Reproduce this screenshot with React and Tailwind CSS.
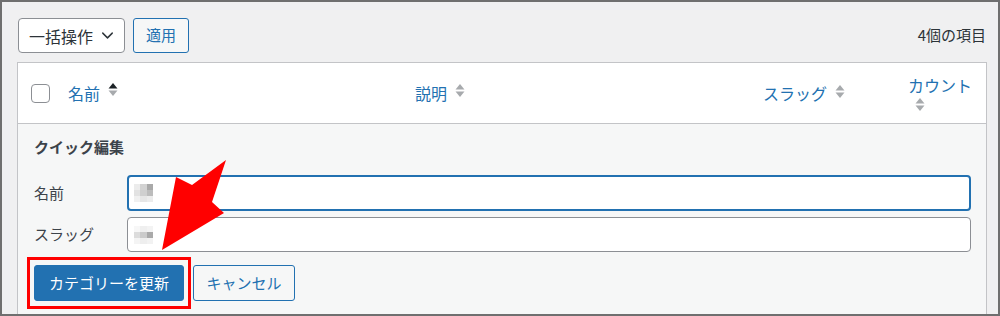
import { ChevronDown } from "lucide-react";

const jp = { fontFamily: '"Noto Sans CJK JP", "Noto Sans", sans-serif' };

function SortArrows({ active }) {
  return (
    <svg width="10" height="13" viewBox="0 0 10 13" className="shrink-0">
      <polygon points="0.5,5.5 5,0 9.5,5.5" fill={active ? "#1d2327" : "#a7aaad"} />
      <polygon points="0.5,7.5 9.5,7.5 5,13" fill="#a7aaad" />
    </svg>
  );
}

function Mosaic({ cells }) {
  return (
    <div className="grid grid-cols-3 w-[19px]">
      {cells.map((c, i) => (
        <div key={i} className="h-[6px]" style={{ background: c }} />
      ))}
    </div>
  );
}

export default function App() {
  return (
    <div
      style={jp}
      className="relative w-[1000px] h-[316px] overflow-hidden border-2 border-[#6f6f6f] bg-[#f0f0f1] pl-[15px] pr-[11px] pt-[16px]"
    >
      {/* toolbar */}
      <div className="flex items-center h-[35px] ml-[1px]">
        <div className="flex items-center justify-between h-[35px] w-[107px] rounded-[4px] border border-[#8c8f94] bg-white pl-[10px] pr-[7px] text-[16px] text-[#2c3338]">
          <span>一括操作</span>
          <ChevronDown size={19} strokeWidth={1.8} className="text-[#2c3338]" />
        </div>
        <button className="ml-[8px] h-[35px] w-[56px] rounded-[3px] border border-[#2271b1] bg-[#f6f7f7] text-[15px] text-[#2271b1]">
          適用
        </button>
        <div className="ml-auto pr-[1px] text-[15px] text-[#2c3338]">4個の項目</div>
      </div>

      {/* table */}
      <div className="mt-[9px] border border-[#c3c4c7] bg-white">
        <div className="flex h-[61px] items-center border-b border-[#c3c4c7] text-[16px] text-[#2271b1]">
          <div className="w-[40px] pl-[13px]">
            <div className="h-[19px] w-[19px] rounded-[4px] border border-[#8c8f94] bg-white" />
          </div>
          <div className="flex w-[347px] items-center gap-[8px] px-[10px]">
            <span>名前</span>
            <span className="-mt-[8px]"><SortArrows active /></span>
          </div>
          <div className="flex w-[348px] items-center gap-[8px] px-[10px]">
            <span>説明</span>
            <span className="-mt-[6px]"><SortArrows /></span>
          </div>
          <div className="flex w-[145px] items-center gap-[8px] px-[10px]">
            <span>スラッグ</span>
            <span className="-mt-[4px]"><SortArrows /></span>
          </div>
          <div className="flex w-[88px] flex-col self-start pl-[10px] pt-[10px]">
            <span className="leading-[24px]">カウント</span>
            <span className="ml-[7px] mt-[1px]"><SortArrows /></span>
          </div>
        </div>

        {/* quick edit */}
        <div className="h-[200px] bg-[#f6f7f7] pl-[16px] pr-[15px] pt-[12px] text-[15px] text-[#3c434a]">
          <div className="font-bold leading-[22px]">クイック編集</div>

          <div className="mt-[17px] flex items-center">
            <div className="w-[93px]">名前</div>
            <div className="flex h-[36px] flex-1 items-center rounded-[4px] border-2 border-[#2271b1] bg-white pl-[5px]">
              <Mosaic cells={["#ececec", "#d2d2d2", "#a9a9a9", "#e2e2e2", "#cfcfcf", "#bcbcbc", "#f0f0f0", "#e6e6e6", "#ececec"]} />
            </div>
          </div>

          <div className="mt-[6px] flex items-center">
            <div className="w-[93px]">スラッグ</div>
            <div className="flex h-[35px] flex-1 items-center rounded-[4px] border border-[#8c8f94] bg-white pl-[6px]">
              <Mosaic cells={["#f7f7f7", "#efefef", "#f3f3f3", "#dcdcdc", "#cbcbcb", "#a9a9a9", "#f4f4f4", "#eeeeee", "#f2f2f2"]} />
            </div>
          </div>

          <div className="mt-[13px] flex items-center">
            <div className="relative">
              <button className="h-[36px] w-[150px] rounded-[3px] border border-[#2271b1] bg-[#2271b1] text-[15px] text-white">
                カテゴリーを更新
              </button>
              <div className="absolute -inset-x-[7px] -inset-y-[8px] border-[3px] border-[#ff0000]" />
            </div>
            <button className="ml-[9px] h-[36px] w-[102px] rounded-[3px] border border-[#2271b1] bg-[#f6f7f7] text-[15px] text-[#2271b1]">
              キャンセル
            </button>
          </div>
        </div>
      </div>

      {/* red arrow annotation */}
      <svg
        className="absolute left-[158px] top-[156px]"
        width="68"
        height="94"
        viewBox="0 0 68 94"
      >
        <polygon points="2,92 16,19 32,27 66,2 52,44 64,55" fill="#ff0000" />
      </svg>
    </div>
  );
}
